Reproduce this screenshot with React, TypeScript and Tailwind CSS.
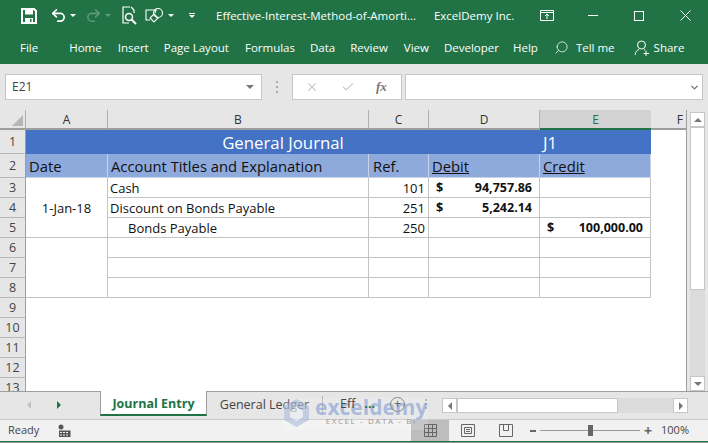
import { X, Check, ChevronDown, Search, Undo2, Redo2 } from "lucide-react";

const COLS = "grid-cols-[26px_82px_261px_60px_111px_111px_35px]";
const line = "border-r border-b border-[#c4c4c4]";

function Caret({ className = "" }: { className?: string }) {
  return <span className={`w-0 h-0 border-x-[3px] border-x-transparent border-t-[3px] border-t-white ${className}`} />;
}

function TitleBar() {
  return (
    <div className="h-[31px] flex items-center text-white text-[11.5px] whitespace-nowrap">
      <div className="flex items-center pl-[21px]">
        <svg width="16" height="16" viewBox="0 0 16 16" className="mr-[13px]">
          <path d="M1 1h12l2 2v12H1z" fill="none" stroke="#fff" strokeWidth="2" />
          <path d="M4 1.500h8v5H4z" fill="#fff" />
          <path d="M4 10h8v5H4z" fill="#fff" />
          <path d="M9 11h1.500v3H9z" fill="#217346" />
        </svg>
        <Undo2 size={17} strokeWidth={2.4} className="mr-[3px]" />
        <Caret className="mr-[9px]" />
        <Redo2 size={17} strokeWidth={2.2} className="text-[#5d9a78] mr-[3px]" />
        <Caret className="mr-[11px] opacity-30" />
        <svg width="15" height="19" viewBox="0 0 15 19" fill="none" stroke="#fff" strokeWidth="1.2" className="mr-[8px]">
          <path d="M8 1H1v16h6" />
          <path d="M9 1l3 3v3" />
          <circle cx="7" cy="11" r="3.500" strokeWidth="1.500" />
          <path d="M9.500 13.500L14 18" strokeWidth="2" />
        </svg>
        <svg width="18" height="17" viewBox="0 0 18 17" fill="none" stroke="#fff" strokeWidth="1.1" className="mr-[5px]">
          <path d="M6 3H1v10h4" />
          <path d="M6 3h5l-1 3" />
          <path d="M9 7l4 4-4 4-4-4z" />
          <circle cx="13" cy="6" r="4.500" />
        </svg>
        <Caret className="mr-[15px]" />
        <span className="flex flex-col items-center gap-[1px] mr-[21px]">
          <span className="w-[6px] h-[1px] bg-white" />
          <Caret />
        </span>
        <span>Effective-Interest-Method-of-Amorti...</span>
        <span className="ml-[18px]">ExcelDemy Inc.</span>
      </div>
      <div className="ml-auto flex items-center">
        <svg width="14" height="11" viewBox="0 0 14 11" fill="none" stroke="#fff" strokeWidth="1" className="mr-[34px]">
          <path d="M.5.500h13v10H.500z" />
          <path d="M.5 2.500h13M7 9V4.500M5 6l2-2 2 2" />
        </svg>
        <span className="w-[10px] h-[1px] bg-white mr-[36px]" />
        <span className="w-[10px] h-[10px] border border-white mr-[36px]" />
        <svg width="11" height="11" viewBox="0 0 11 11" stroke="#fff" strokeWidth="1" className="mr-[17px]">
          <path d="M.5.500l10 10M10.500.5l-10 10" />
        </svg>
      </div>
    </div>
  );
}

function RibbonTabs() {
  const tabs: [string, string][] = [
    ["Home", "ml-[31px]"],
    ["Insert", "ml-[16px]"],
    ["Page Layout", "ml-[15px]"],
    ["Formulas", "ml-[16px]"],
    ["Data", "ml-[15px]"],
    ["Review", "ml-[15px]"],
    ["View", "ml-[16px]"],
    ["Developer", "ml-[15px]"],
    ["Help", "ml-[14px]"],
  ];
  return (
    <div className="h-[33px] flex items-center text-white text-[11.5px] whitespace-nowrap">
      <span className="ml-[20px]">File</span>
      {tabs.map(([t, m]) => (
        <span key={t} className={m}>{t}</span>
      ))}
      <Search size={15} strokeWidth={1.2} className="ml-[16px] -scale-x-100" />
      <span className="ml-[7px]">Tell me</span>
      <svg width="16" height="16" viewBox="0 0 16 16" fill="none" stroke="#fff" strokeWidth="1" className="ml-[19px]">
        <circle cx="7.500" cy="5" r="4" />
        <path d="M1 15c.5-3 2-5 4-5.500M10 9.500l1 .5M12 10.500V16M9.500 13.500h5.500" />
      </svg>
      <span className="ml-[4px]">Share</span>
    </div>
  );
}

function FormulaBar() {
  return (
    <div className="h-[46px] bg-[#e6e6e6] flex items-start pt-[10px] pl-[5px] text-[12px] text-[#444]">
      <div className="w-[257px] h-[26px] bg-white border border-[#c6c6c6] flex items-center pl-[6px] pr-[7px]">
        <span>E21</span>
        <span className="ml-auto w-0 h-0 border-x-[4px] border-x-transparent border-t-[4px] border-t-[#777]" />
      </div>
      <div className="w-[4px] h-[12px] mx-[13px] mt-[7px] flex flex-col justify-between items-center">
        <span className="w-[2px] h-[2px] bg-[#aaa]" />
        <span className="w-[2px] h-[2px] bg-[#aaa]" />
        <span className="w-[2px] h-[2px] bg-[#aaa]" />
      </div>
      <div className="w-[110px] h-[26px] bg-white border border-[#c6c6c6] flex items-center">
        <X size={14} strokeWidth={1.8} className="ml-[12px] text-[#bdbdbd]" />
        <Check size={14} strokeWidth={1.8} className="ml-[22px] text-[#bdbdbd]" />
        <span className="ml-[21px] text-[13px] italic font-['Liberation_Serif',serif] font-bold text-[#777]">fx</span>
      </div>
      <div className="w-[298px] h-[26px] ml-[3px] bg-white border border-[#c6c6c6] flex items-center justify-end pr-[2px]">
        <ChevronDown size={11} strokeWidth={3} className="text-[#777]" />
      </div>
    </div>
  );
}

function ColHead({ label, active }: { label: string; active?: boolean }) {
  return (
    <div
      className={`flex items-center justify-center border-b-2 pt-[2px] text-[12px] ${
        active
          ? "bg-[#d2d2d2] border-[#217346] text-[#217346]"
          : "bg-[#e6e6e6] border-r border-r-[#b0b0b0] border-b-[#9e9e9e] text-[#333]"
      }`}
    >
      {label}
    </div>
  );
}

function RowHead({ n }: { n: number }) {
  return (
    <div className="bg-[#e6e6e6] border-r border-r-[#9e9e9e] border-b border-b-[#b8b8b8] flex items-center justify-center pt-[2px] text-[12.5px] text-[#444]">
      {n}
    </div>
  );
}

function Amount({ value }: { value: string }) {
  return (
    <div className={`${line} flex items-center justify-between pt-[2px] text-[12.5px] font-bold pl-[7px] pr-[7px] text-[#111]`}>
      <span>$</span>
      <span>{value}</span>
    </div>
  );
}

function Sheet() {
  const hdr = "bg-[#8ea9db] border-r border-b border-[#c9d3e6] flex items-center pt-[2px] pl-[3px] text-[14.8px] text-[#111] whitespace-nowrap";
  const txt = `${line} flex items-center pt-[2px] pl-[2px] text-[#111]`;
  const num = `${line} flex items-center justify-end pt-[2px] pr-[3px] text-[#111]`;
  return (
    <div className={`grid ${COLS} grid-rows-[20px_24px_24px_repeat(11,20px)] bg-white text-[13px] h-[281px] overflow-hidden`}>
      <div className="bg-[#e6e6e6] border-r border-b-2 border-r-[#b0b0b0] border-b-[#9e9e9e] flex items-end justify-end p-[2px]">
        <span className="w-0 h-0 border-l-[11px] border-l-transparent border-b-[11px] border-b-[#b5b5b5]" />
      </div>
      <ColHead label="A" />
      <ColHead label="B" />
      <ColHead label="C" />
      <ColHead label="D" />
      <ColHead label="E" active />
      <div className="bg-[#e6e6e6] border-b-2 border-[#9e9e9e] flex items-center justify-end pt-[2px] text-[12px] text-[#333] pr-[3px]">F</div>

      <RowHead n={1} />
      <div className="col-span-4 bg-[#4472c4] text-white text-[16.8px] pt-[2px] flex items-center justify-center">General Journal</div>
      <div className="bg-[#4472c4] text-white text-[16.8px] pt-[2px] flex items-center pl-[3px]">J1</div>
      <div />

      <RowHead n={2} />
      <div className={hdr}>Date</div>
      <div className={hdr}>Account Titles and Explanation</div>
      <div className={`${hdr} pl-[4px]`}>Ref.</div>
      <div className={hdr}><span className="underline">Debit</span></div>
      <div className={hdr}><span className="underline">Credit</span></div>
      <div />

      <RowHead n={3} />
      <div className={`${line} row-span-3 flex items-center justify-center pt-[2px] text-[#111]`}>1-Jan-18</div>
      <div className={txt}>Cash</div>
      <div className={num}>101</div>
      <Amount value="94,757.86" />
      <div className={line} />
      <div />

      <RowHead n={4} />
      <div className={txt}>Discount on Bonds Payable</div>
      <div className={num}>251</div>
      <Amount value="5,242.14" />
      <div className={line} />
      <div />

      <RowHead n={5} />
      <div className={`${txt} pl-[20px]`}>Bonds Payable</div>
      <div className={num}>250</div>
      <div className={line} />
      <Amount value="100,000.00" />
      <div />

      <RowHead n={6} />
      <div className={`${line} row-span-3`} />
      {[0, 1, 2].map((r) => (
        <div key={r} className="contents">
          {r > 0 && <RowHead n={6 + r} />}
          <div className={line} />
          <div className={line} />
          <div className={line} />
          <div className={line} />
          <div />
        </div>
      ))}
      {[9, 10, 11, 12, 13].map((n) => (
        <div key={n} className="contents">
          <RowHead n={n} />
          <div className="col-span-6" />
        </div>
      ))}
    </div>
  );
}

function Scrollbar() {
  return (
    <div className="w-[22px] h-[281px] bg-[#e6e6e6] border-l border-[#9e9e9e] pl-[3px] pt-[2px] flex flex-col">
      <div className="w-[15px] h-[15px] bg-white border border-[#c6c6c6] flex items-center justify-center">
        <span className="w-0 h-0 border-x-[4px] border-x-transparent border-b-[4px] border-b-[#777]" />
      </div>
      <div className="w-[15px] h-[163px] bg-white border border-[#c6c6c6]" />
      <div className="w-[15px] flex-1 bg-[#dcdcdc]" />
      <div className="w-[15px] h-[15px] bg-white border border-[#c6c6c6] flex items-center justify-center">
        <span className="w-0 h-0 border-x-[4px] border-x-transparent border-t-[4px] border-t-[#777]" />
      </div>
    </div>
  );
}

function SheetTabs() {
  return (
    <div className="h-[28px] bg-[#e6e6e6] border-t border-[#9e9e9e] flex text-[12.5px] whitespace-nowrap relative">
      <div className="w-[100px] h-[25px] flex items-center">
        <span className="ml-[27px] w-0 h-0 border-y-[4px] border-y-transparent border-r-[4px] border-r-[#c0c0c0]" />
        <span className="ml-[26px] w-0 h-0 border-y-[4px] border-y-transparent border-l-[4px] border-l-[#217346]" />
      </div>
      <div className="w-[107px] h-[25px] -mt-[1px] pt-[3px] bg-white border-x border-[#9e9e9e] border-b-2 border-b-[#217346] flex items-center justify-center font-bold text-[#217346]">
        Journal Entry
      </div>
      <div className="w-[116px] h-[18px] mt-[4px] flex items-center justify-center text-[#444] border-r border-[#b0b0b0]">General Ledger</div>
      {/* exceldemy watermark, sits under the last tab text */}
      <div className="absolute left-[283px] top-[6px] w-[145px] h-[32px] bg-white/15 flex items-start pointer-events-none">
        <svg width="27" height="29" viewBox="0 0 27 29" className="opacity-60">
          <path d="M13.500 1L26 8v14l-12.500 7L1 22V8z" fill="#a9bbdd" />
          <path d="M13.500 9l6.500 4v6l-6.500 4L7 19v-6z" fill="#eef1f8" />
        </svg>
        <div className="ml-[5px] -mt-[1px] flex flex-col leading-none items-center">
          <span className="text-[21px] font-bold text-[#7f9ad2]/60">exceldemy</span>
          <span className="text-[8px] tracking-[0.2em] text-[#999] -mt-[1px]">EXCEL - DATA - BI</span>
        </div>
      </div>
      <span className="relative ml-[17px] mt-[3px] text-[#444]">Eff</span>
      <span className="relative ml-[9px] mt-[3px] text-[#217346] font-bold">...</span>
      <span className="relative ml-[15px] mt-[5px] w-[15px] h-[15px] rounded-full border border-[#888] flex items-center justify-center text-[#666] leading-none">+</span>
      <div className="ml-[20px] mt-[7px] h-[10px] border-l-2 border-dotted border-[#aaa]" />
      <div className="ml-[15px] mt-[6px] w-[246px] h-[15px] flex">
        <div className="w-[15px] bg-white border border-[#c6c6c6] flex items-center justify-center">
          <span className="w-0 h-0 border-y-[4px] border-y-transparent border-r-[4px] border-r-[#777]" />
        </div>
        <div className="w-[161px] bg-white border border-[#c6c6c6]" />
        <div className="flex-1 bg-[#dcdcdc]" />
        <div className="w-[15px] bg-white border border-[#c6c6c6] flex items-center justify-center">
          <span className="w-0 h-0 border-y-[4px] border-y-transparent border-l-[4px] border-l-[#777]" />
        </div>
      </div>
    </div>
  );
}

function StatusBar() {
  return (
    <div className="h-[22px] bg-[#f1f1f1] border-t border-[#c8c8c8] flex items-center text-[11px] text-[#444]">
      <span className="ml-[8px]">Ready</span>
      <svg width="13" height="13" viewBox="0 0 13 13" className="ml-[19px]" fill="#555">
        <circle cx="3" cy="3" r="2.500" />
        <path d="M1 6.500h11.500V13H1zM2 8v1h2V8zm3 0v1h2V8zm3 0v1h2V8zm-6 2.500v1h2v-1zm3 0v1h2v-1zm3 0v1h2v-1z" fillRule="evenodd" />
      </svg>
      <div className="ml-auto flex items-center h-full">
        <div className="w-[38px] h-full bg-[#bdbdbd] flex items-center justify-center">
          <svg width="13" height="13" viewBox="0 0 13 13" fill="none" stroke="#666">
            <path d="M.5.500h12v12H.500zM.5 4.500h12M.5 8.500h12M4.500.5v12M8.500.5v12" />
          </svg>
        </div>
        <svg width="14" height="13" viewBox="0 0 14 13" fill="none" stroke="#666" className="ml-[12px]">
          <path d="M.5.500h13v12H.500zM3.500 3.500h7v6h-7zM5 5.500h4M5 7.500h4" />
        </svg>
        <svg width="14" height="13" viewBox="0 0 14 13" fill="none" stroke="#666" className="ml-[24px]">
          <path d="M.5.500h13v12H.500zM4.500.5v6h5v-6" />
        </svg>
        <span className="ml-[17px] w-[6px] h-[2px] bg-[#666]" />
        <div className="ml-[4px] w-[100px] h-[1px] bg-[#999] relative">
          <span className="absolute left-[48px] -top-[5px] w-[5px] h-[11px] bg-[#666]" />
        </div>
        <span className="ml-[4px] text-[14px] font-bold text-[#666] leading-none">+</span>
        <span className="ml-[9px] mr-[19px]">100%</span>
      </div>
    </div>
  );
}

export default function App() {
  return (
    <div className="w-[708px] h-[443px] overflow-hidden bg-[#e6e6e6] font-['Open_Sans','Noto_Sans',sans-serif]">
      <div className="bg-[#217346]">
        <TitleBar />
        <RibbonTabs />
      </div>
      <FormulaBar />
      <div className="flex">
        <div className="w-[686px] overflow-hidden"><Sheet /></div>
        <Scrollbar />
      </div>
      <SheetTabs />
      <StatusBar />
      <div className="h-[1px] bg-[#217346]" />
      <div className="h-[1px] bg-[#9a9a9a]" />
    </div>
  );
}
